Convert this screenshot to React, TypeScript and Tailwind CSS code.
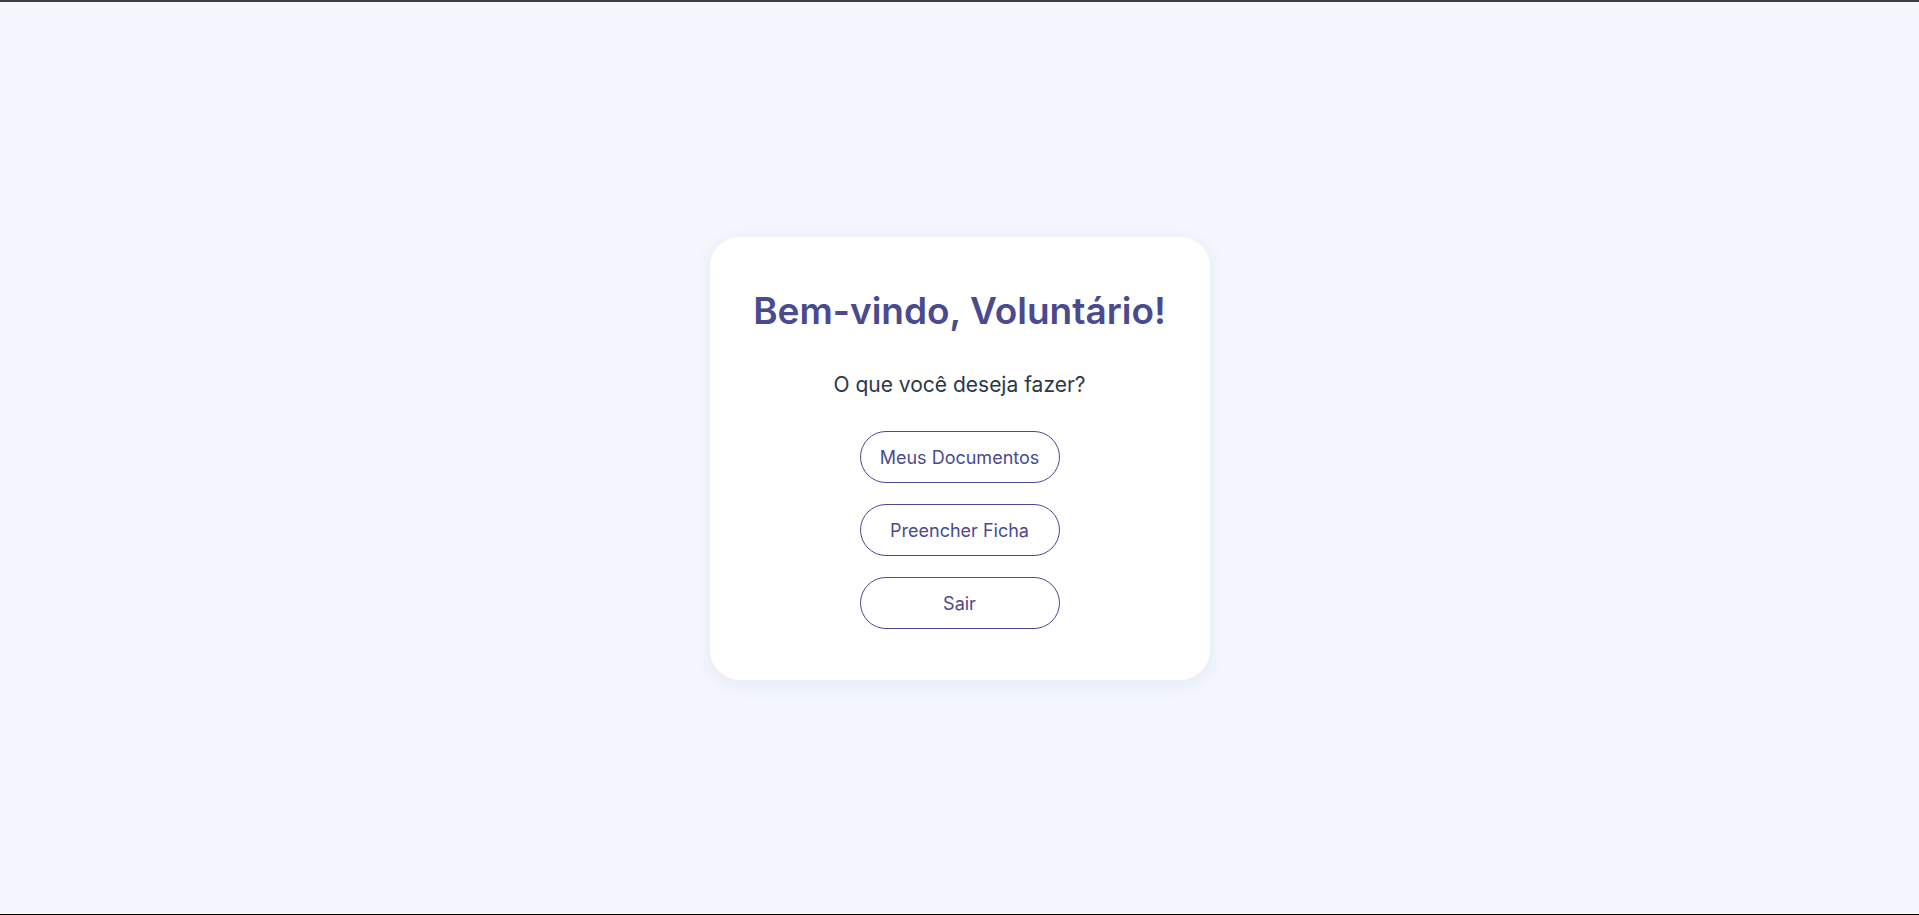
const actions = ['Meus Documentos', 'Preencher Ficha', 'Sair'];

export default function App() {
  return (
    <div className="h-screen flex flex-col bg-[#f4f7fe] border-t-2 border-b border-t-[#3f3f3f] border-b-black font-['Inter',sans-serif]">
      <main className="flex-1 flex items-center justify-center">
        <div className="w-[500px] bg-white rounded-[30px] shadow-[0_4px_20px_rgba(40,50,90,0.08)] pt-[52px] pb-[51px] flex flex-col items-center">
          <h1 className="text-[37px] leading-[44px] font-semibold text-[#4a4a8f]">
            Bem-vindo, Voluntário!
          </h1>
          <p className="mt-[38px] text-[21px] leading-[28px] text-[#2d3748]">
            O que você deseja fazer?
          </p>
          <div className="mt-[32px] flex flex-col items-center gap-[21px]">
            {actions.map((label) => (
              <button
                key={label}
                className="w-[200px] h-[52px] pt-[2px] rounded-full border border-[#4a4a8f] bg-white text-[18px] text-[#4a4a8f] cursor-pointer"
              >
                {label}
              </button>
            ))}
          </div>
        </div>
      </main>
    </div>
  );
}
